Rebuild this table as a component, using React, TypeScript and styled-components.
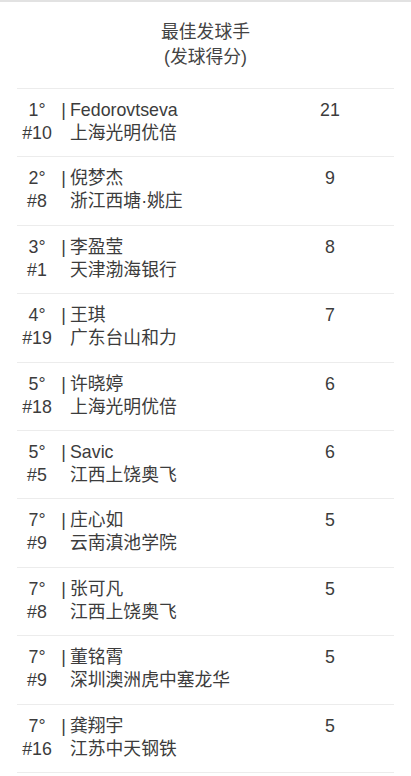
import styled, { createGlobalStyle } from "styled-components";

type Server = {
  rank: string;
  no: string;
  name: string;
  team: string;
  score: number;
};

const servers: Server[] = [
  { rank: "1°", no: "#10", name: "Fedorovtseva", team: "上海光明优倍", score: 21 },
  { rank: "2°", no: "#8", name: "倪梦杰", team: "浙江西塘·姚庄", score: 9 },
  { rank: "3°", no: "#1", name: "李盈莹", team: "天津渤海银行", score: 8 },
  { rank: "4°", no: "#19", name: "王琪", team: "广东台山和力", score: 7 },
  { rank: "5°", no: "#18", name: "许晓婷", team: "上海光明优倍", score: 6 },
  { rank: "5°", no: "#5", name: "Savic", team: "江西上饶奥飞", score: 6 },
  { rank: "7°", no: "#9", name: "庄心如", team: "云南滇池学院", score: 5 },
  { rank: "7°", no: "#8", name: "张可凡", team: "江西上饶奥飞", score: 5 },
  { rank: "7°", no: "#9", name: "董铭霄", team: "深圳澳洲虎中塞龙华", score: 5 },
  { rank: "7°", no: "#16", name: "龚翔宇", team: "江苏中天钢铁", score: 5 },
];

const GlobalStyle = createGlobalStyle`
  html, body {
    margin: 0;
    padding: 0;
    background: #fff;
  }
  body {
    font-family: "Liberation Sans", Arial, "Noto Sans CJK SC", sans-serif;
    color: #3c3c3c;
  }
`;

const Page = styled.div`
  width: 411px;
  height: 776px;
  overflow: hidden;
  border-top: 2px solid #e2e2e2;
  box-sizing: border-box;
`;

const Header = styled.div`
  height: 86px;
  padding-top: 18px;
  box-sizing: border-box;
  text-align: center;
  font-size: 17.8px;
  line-height: 25px;
  color: #444;
`;

const Table = styled.div`
  margin: 0 17px;
  border-bottom: 1px solid #ececec;
`;

const Row = styled.div`
  display: grid;
  grid-template-columns: 40px 13px 1fr 60px 34px;
  grid-template-rows: 23px 23px;
  padding: 10px 0 11.4px;
  border-top: 1px solid #ececec;
  font-size: 17.8px;
  line-height: 23px;
`;

const Rank = styled.div<{ $line: number }>`
  grid-column: 1;
  grid-row: ${(p) => p.$line};
  text-align: center;
`;

const Bar = styled.div`
  grid-column: 2;
  grid-row: 1;
  text-align: center;
`;

const Name = styled.div<{ $line: number }>`
  grid-column: 3;
  grid-row: ${(p) => p.$line};
  white-space: nowrap;
`;

const Score = styled.div`
  grid-column: 4;
  grid-row: 1;
  text-align: center;
`;

const App = () => {
  return (
    <Page>
      <GlobalStyle />
      <Header>
        最佳发球手
        <br />
        (发球得分)
      </Header>
      <Table>
        {servers.map((s, i) => (
          <Row key={i}>
            <Rank $line={1}>{s.rank}</Rank>
            <Bar>|</Bar>
            <Name $line={1}>{s.name}</Name>
            <Score>{s.score}</Score>
            <Rank $line={2}>{s.no}</Rank>
            <Name $line={2}>{s.team}</Name>
          </Row>
        ))}
      </Table>
    </Page>
  );
};

export default App;
